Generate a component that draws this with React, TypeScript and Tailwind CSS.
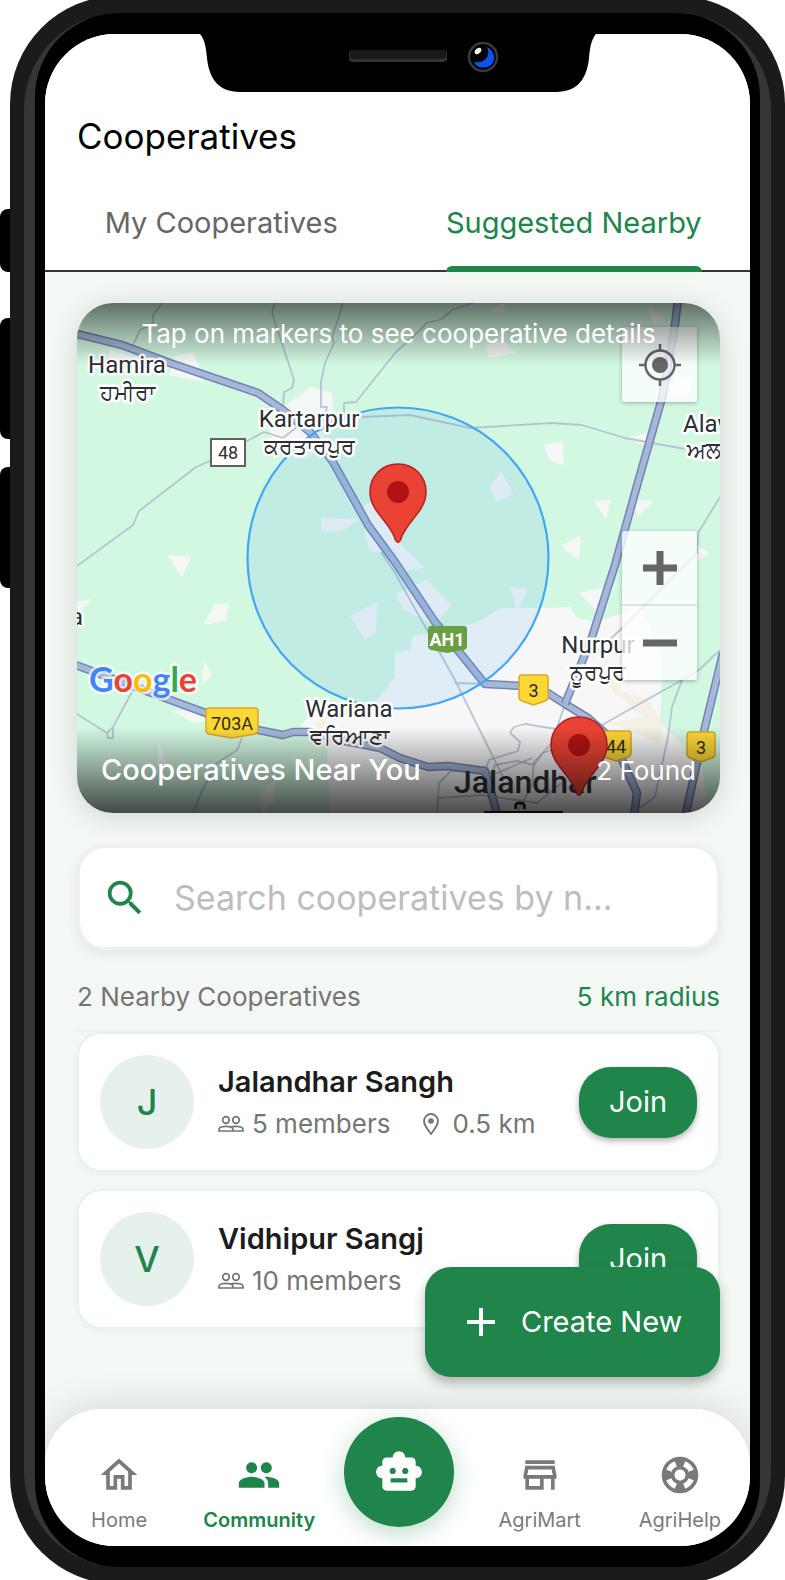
import React, { useState } from "react";
import {
  MdAdd,
  MdOutlineHome,
  MdOutlineStore,
  MdOutlineSupport,
  MdPeople,
  MdSearch,
  MdSmartToy,
} from "react-icons/md";

const HIGHWAYS = [
  "M-4 30 L45 42 L93 60 L181 90 L206 107 L233 129 L256 159 L291 222 L318 259 L358 319 L408 381 L445 383 L471 390 L488 401 L511 415 L528 430 L545 457 L560 490 L557 514",
  "M601 -4 L598 22 L585 95 L561 179 L538 262 L515 334 L488 401",
  "M-4 361 L126 409 L166 424 L206 432 L216 429 L233 429 L263 437 L303 445 L323 455 L351 464 L371 463 L408 468 L421 514",
  "M646 350 L628 424 L608 514",
];

const ROADS = [
  "M0 263 L56 222 L62 208 L119 164 L133 158 L187 129 L206 135 L220 124",
  "M198 0 L195 10 L217 77 L215 85 L207 89 L206 105",
  "M266 0 L255 35 L257 40 L248 60 L244 79 L244 104 L250 104 L244 128",
  "M396 0 L375 7 L365 16 L350 20 L338 32 L318 50 L279 99 L267 100 L267 112",
  "M85 0 L76 12 L76 20 L63 27 L56 42",
  "M240 120 L283 114 L333 112 L393 125 L475 120 L505 122 L548 135 L608 146",
  "M643 194 L621 230 L620 250 L580 290 L540 330 L516 352",
  "M55 389 L36 424 L30 430 L0 411 M36 424 V435 H31 L30 430",
  "M165 435 L160 447 L140 460 L125 488 L116 510",
  "M304 249 L318 270 L378 377 L426 474 M378 380 L408 381",
  "M643 347 L622 367 L605 377 L525 422 M605 377 L595 404 L591 434 L578 494 L563 505",
  "M488 401 L475 440 L457 459 L455 482 L440 510",
  "M433 430 L437 424 L448 421 L485 427 L493 440 L466 450 L457 462 L440 458 L418 462 L414 474 M433 430 L443 439 L441 448 L412 457 L408 468",
  "M374 468 L362 480 L360 510 M362 495 L405 492 L460 500 L485 480 M374 468 L420 470 L455 455",
];

const PATCHES = [
  "206 105 234 84 255 90 256 108 246 136 233 155 218 156 207 138 193 134 196 116",
  "32 47 62 55 60 64 30 62",
  "98 53 117 49 126 79 92 72",
  "411 7 427 0 428 10",
  "571 2 586 17 577 22",
  "408 42 427 38 438 50 412 55",
  "598 73 617 75 611 94 590 94",
  "467 141 486 139 487 162 473 158",
  "550 135 572 130 570 144",
  "517 198 534 197 529 216",
  "552 197 577 198 562 213",
  "484 243 504 232 502 258",
  "620 242 633 250 620 258",
  "502 290 541 281 519 308",
  "90 252 114 254 105 274",
  "138 301 152 300 149 318 126 322",
  "0 299 15 296 0 311",
  "127 357 135 372 125 382",
  "94 408 126 405 128 418 118 420",
  "82 440 90 462 80 463",
  "182 490 200 475 196 500 186 510",
  "413 184 424 168 436 191 419 199",
  "244 215 282 216 265 228 244 229",
  "283 205 296 198 330 250 292 248",
  "318 252 331 248 348 265 320 268",
  "273 313 300 299 299 330 288 336",
  "318 291 350 277 374 302 358 322 326 306",
  "433 284 451 286 440 308",
];

type LabelProps = {
  x: number;
  y: number;
  size?: number;
  anchor?: "start" | "middle";
  children: string;
};

function MapLabel({ x, y, size = 24, anchor = "middle", children }: LabelProps) {
  return (
    <text
      x={x}
      y={y}
      fontSize={size}
      textAnchor={anchor}
      fill="#2c2f33"
      stroke="#ffffff"
      strokeWidth={5}
      strokeLinejoin="round"
      paintOrder="stroke"
    >
      {children}
    </text>
  );
}

function Shield({ x, y, w, label }: { x: number; y: number; w: number; label: string }) {
  return (
    <g>
      <path
        d={`M${x + 3} ${y} H${x + w - 3} Q${x + w} ${y} ${x + w} ${y + 3} V${y + 22} Q${x + w} ${y + 25} ${x + w - 3} ${y + 26} L${x + w / 2} ${y + 30} L${x + 3} ${y + 26} Q${x} ${y + 25} ${x} ${y + 22} V${y + 3} Q${x} ${y} ${x + 3} ${y} Z`}
        fill="#fdd835"
        stroke="#d9a82a"
        strokeWidth="1.5"
      />
      <text x={x + w / 2} y={y + 22} fontSize="18" textAnchor="middle" fill="#2f2a14">
        {label}
      </text>
    </g>
  );
}

function Pin({ x, y }: { x: number; y: number }) {
  return (
    <g transform={`translate(${x} ${y})`}>
      <path
        d="M0 -78 C-16 -78 -28 -66 -28 -50 C-28 -30 -8 -21 -2.500 -2 Q0 3 2.500 -2 C8 -21 28 -30 28 -50 C28 -66 16 -78 0 -78 Z"
        fill="#ea4335"
        stroke="#b8201c"
        strokeWidth="1.500"
      />
      <circle cy="-50" r="11" fill="#b11313" />
    </g>
  );
}

function MembersIcon() {
  return (
    <svg viewBox="0 0 26 18" className="h-[18px] w-[26px]" fill="none" stroke="currentColor" strokeWidth="1.700" aria-hidden="true">
      <circle cx="8" cy="5" r="3.300" />
      <circle cx="18" cy="5" r="3.300" />
      <path d="M1 16 V14.500 C1 12.500 4.500 11.300 8 11.300 C11.500 11.300 15 12.500 15 14.500 V16 Z" />
      <path d="M12 12 C13.800 11.500 16 11.300 18 11.300 C21.500 11.300 25 12.500 25 14.500 V16 H15" />
    </svg>
  );
}

function PlaceIcon() {
  return (
    <svg viewBox="0 0 18 24" className="h-6 w-[18px]" fill="none" stroke="currentColor" strokeWidth="1.900" aria-hidden="true">
      <path d="M9 22 C5 17 2 13 2 9 A7 7 0 0 1 16 9 C16 13 13 17 9 22 Z" />
      <circle cx="9" cy="9" r="2.800" fill="currentColor" stroke="none" />
    </svg>
  );
}

function MapArt() {
  return (
    <svg
      viewBox="0 0 643 510"
      preserveAspectRatio="xMidYMid slice"
      className="block h-[510px] w-full font-['Roboto','Noto_Sans',sans-serif]"
      role="img"
      aria-label="Map of cooperatives around Jalandhar"
    >
      <rect width="643" height="510" fill="#d3f8e2" />
      <polygon
        fill="#f7f7f7"
        points="333,347 336,333 398,320 425,305 468,305 493,304 500,315 521,319 545,310 561,300 574,325 585,357 583,420 608,444 625,462 630,510 253,510 250,444 223,422 240,408 286,414 300,397 318,374 318,350"
      />
      <polygon fill="#f5efe4" points="534,385 570,396 585,420 583,440 560,430 530,420 566,415" />
      <polygon fill="#f5efe4" points="528,375 548,366 540,395" />
      <polygon fill="#f5efe4" points="236,421 250,414 246,430" />
      {PATCHES.map((points) => (
        <polygon key={points} points={points} fill="#f5f6f6" />
      ))}
      <g fill="none" stroke="#a9b3c8" strokeOpacity="0.75" strokeWidth="1.800" strokeLinejoin="round">
        {ROADS.map((d) => (
          <path key={d} d={d} />
        ))}
      </g>
      {HIGHWAYS.map((d) => (
        <g key={d} fill="none" strokeLinejoin="round">
          <path d={d} stroke="#7186b4" strokeWidth="8.500" />
          <path d={d} stroke="#a6b7d8" strokeWidth="5.500" />
        </g>
      ))}
      <circle cx="321" cy="255" r="150.500" fill="#3ba0ee" fillOpacity="0.120" stroke="#42a5f5" strokeWidth="2.200" />

      <MapLabel x={50} y={70}>Hamira</MapLabel>
      <MapLabel x={50} y={97} size={22}>ਹਮੀਰਾ</MapLabel>
      <MapLabel x={232} y={124}>Kartarpur</MapLabel>
      <MapLabel x={232} y={151} size={22}>ਕਰਤਾਰਪੁਰ</MapLabel>
      <MapLabel x={606} y={129} anchor="start">Alaw</MapLabel>
      <MapLabel x={610} y={155} size={22} anchor="start">ਅਲ</MapLabel>
      <MapLabel x={-7} y={322} anchor="start">a</MapLabel>
      <MapLabel x={272} y={414}>Wariana</MapLabel>
      <MapLabel x={272} y={441} size={22}>ਵਰਿਆਣਾ</MapLabel>
      <MapLabel x={521} y={350}>Nurpur</MapLabel>
      <MapLabel x={521} y={377} size={22}>ਨੂਰਪੁਰ</MapLabel>

      <rect x="134" y="136" width="34" height="27" fill="#ffffff" stroke="#616161" strokeWidth="2" />
      <text x="151" y="156" fontSize="18" textAnchor="middle" fill="#2c2f33">48</text>

      <path
        d="M354 323 H387 Q390 323 390 326 V343 Q390 346 387 347 L370 350 L354 347 Q351 346 351 343 V326 Q351 323 354 323 Z"
        fill="#6aa041"
      />
      <text x="370" y="343" fontSize="18" fontWeight="700" textAnchor="middle" fill="#ffffff">AH1</text>

      <Shield x={129} y={405} w={52} label="703A" />
      <Shield x={442} y={372} w={29} label="3" />
      <Shield x={524} y={428} w={30} label="44" />
      <Shield x={610} y={429} w={28} label="3" />

      <text
        x="12"
        y="389"
        fontSize="34"
        fontWeight="700"
        stroke="#ffffff"
        strokeOpacity="0.700"
        strokeWidth="5"
        strokeLinejoin="round"
        paintOrder="stroke"
        fontFamily="Lato, sans-serif"
      >
        <tspan fill="#4285f4">G</tspan>
        <tspan fill="#ea4335">o</tspan>
        <tspan fill="#fbbc05">o</tspan>
        <tspan fill="#4285f4">g</tspan>
        <tspan fill="#34a853">l</tspan>
        <tspan fill="#ea4335">e</tspan>
      </text>

      <text x="377" y="490" fontSize="32" fontWeight="500" fill="#2c2f33">Jalandhar</text>
      <rect x="407" y="508" width="79" height="2" fill="#1c1c1c" />
      <path d="M439 506 q-2 -6 4 -6 q6 0 4 6" fill="none" stroke="#1c1c1c" strokeWidth="3" />

      <Pin x={321} y={239} />
      <Pin x={502} y={492} />
    </svg>
  );
}

function MapCard() {
  return (
    <section className="relative overflow-hidden rounded-[36px] shadow-[0_4px_28px_rgba(0,0,0,0.14)]">
      <MapArt />
      <button
        type="button"
        aria-label="My location"
        className="absolute top-6 right-[23px] grid size-[75px] place-items-center rounded-[3px] bg-white/75 shadow-[0_1px_4px_rgba(0,0,0,0.3)]"
      >
        <svg viewBox="0 0 42 42" className="size-[42px]" fill="none" stroke="#666666" strokeWidth="2.500">
          <circle cx="21" cy="21" r="14.500" />
          <circle cx="21" cy="21" r="8" fill="#666666" stroke="none" />
          <path d="M21 0 V6 M21 36 V42 M0 21 H6 M36 21 H42" />
        </svg>
      </button>
      <div className="absolute top-[228px] right-[23px] flex w-[75px] flex-col rounded-[3px] bg-white/75 shadow-[0_1px_4px_rgba(0,0,0,0.3)]">
        <button type="button" aria-label="Zoom in" className="grid h-[75px] place-items-center border-b-2 border-black/10">
          <svg viewBox="0 0 34 34" className="size-[34px]" stroke="#666666" strokeWidth="7">
            <path d="M17 0 V34 M0 17 H34" />
          </svg>
        </button>
        <button type="button" aria-label="Zoom out" className="grid h-[74px] place-items-center">
          <svg viewBox="0 0 34 34" className="size-[34px]" stroke="#666666" strokeWidth="7">
            <path d="M0 17 H34" />
          </svg>
        </button>
      </div>
      <p className="pointer-events-none absolute inset-x-0 top-0 h-[62px] bg-linear-to-b from-black/55 to-transparent text-center text-[26px] leading-[62px] whitespace-nowrap text-white">
        Tap on markers to see cooperative details
      </p>
      <div className="pointer-events-none absolute inset-x-0 bottom-0 flex h-[86px] items-center justify-between bg-linear-to-t from-black/70 to-transparent px-6 text-white">
        <h2 className="text-[29px] leading-9 font-medium">Cooperatives Near You</h2>
        <span className="text-[26px]">2 Found</span>
      </div>
    </section>
  );
}

type Cooperative = { name: string; members: string; distance: string };

const COOPERATIVES: Cooperative[] = [
  { name: "Jalandhar Sangh", members: "5 members", distance: "0.5 km" },
  { name: "Vidhipur Sangj", members: "10 members", distance: "" },
];

function CooperativeCard({ name, members, distance }: Cooperative) {
  return (
    <li className="flex h-[140px] items-center rounded-3xl border-2 border-[#e8f2ed] bg-white px-[21px] shadow-[0_2px_6px_rgba(0,0,0,0.03)]">
      <span className="grid size-[94px] shrink-0 place-items-center rounded-full bg-[#e7f1ec] text-4xl font-medium text-[#20854b]">
        {name[0]}
      </span>
      <div className="ml-6 flex-1">
        <h3 className="text-[29px] leading-[44px] font-semibold text-[#1c1c1c]">{name}</h3>
        <p className="flex items-center text-[26px] leading-10 whitespace-nowrap text-[#757575]">
          <MembersIcon />
          <span className="ml-2">{members}</span>
          {distance && (
            <>
              <span className="ml-8">
                <PlaceIcon />
              </span>
              <span className="ml-3">{distance}</span>
            </>
          )}
        </p>
      </div>
      <button
        type="button"
        className="h-[71px] w-[118px] rounded-[32px] bg-[#20854b] text-[29px] text-white shadow-[0_3px_6px_rgba(0,0,0,0.3)]"
      >
        Join
      </button>
    </li>
  );
}

const TABS = ["My Cooperatives", "Suggested Nearby"];

function NavItem({ icon, label, active = false }: { icon: React.ReactNode; label: string; active?: boolean }) {
  return (
    <a
      href="#"
      aria-current={active ? "page" : undefined}
      className={`flex flex-col items-center gap-2 pt-11 text-[20px] leading-[30px] ${
        active ? "font-semibold text-[#20854b]" : "text-[#7a7a7a]"
      }`}
    >
      {icon}
      {label}
    </a>
  );
}

export default function App() {
  const [tab, setTab] = useState(1);

  return (
    <div className="flex min-h-screen overflow-hidden bg-white font-['Inter','Noto_Sans',sans-serif] text-black">
      <div className="flex w-[10px] shrink-0 flex-col pt-[209px]">
        <span className="h-[63px] rounded-l-lg bg-black" />
        <span className="mt-[46px] h-[121px] rounded-l-lg bg-black" />
        <span className="mt-7 h-[121px] rounded-l-lg bg-black" />
      </div>

      <div className="-my-1 flex flex-1 rounded-[108px] bg-[#1b1b1b] px-[14px] py-[17px]">
        <div className="flex flex-1 rounded-[96px] bg-[#353535] px-[11px]">
          <div className="flex flex-1 rounded-[84px] bg-black px-[10px] py-[21px]">
            <div className="relative flex flex-1 flex-col overflow-hidden rounded-[70px] bg-[#f3f8f5]">
              <svg
                viewBox="0 0 396 58"
                className="absolute top-0 left-1/2 h-[58px] w-[396px] -translate-x-1/2"
                aria-hidden="true"
              >
                <path d="M0 0 H396 C391 6 390 14 389 24 C387 44 378 58 356 58 H40 C18 58 9 44 7 24 C6 14 5 6 0 0 Z" fill="#000000" />
                <rect x="149" y="16" width="98" height="12" rx="4" fill="#333333" />
                <rect x="150" y="16" width="96" height="9" rx="3" fill="#191919" />
                <circle cx="283" cy="23" r="14" fill="#000000" stroke="#3a3a3a" strokeWidth="2.500" />
                <path d="M287 13 C297 18 297 33 284 33.500 C279 34 276 32 274 28 C285 30 291 22 287 13 Z" fill="#0a54f5" />
                <ellipse cx="278" cy="17" rx="2.500" ry="3.800" fill="#ffffff" transform="rotate(50 278 17)" />
              </svg>

              <header className="bg-white pt-[78px]">
                <h1 className="px-8 text-[35px] leading-[48px]">Cooperatives</h1>
                <div role="tablist" className="mt-[14px] grid h-[98px] grid-cols-2 border-b-2 border-[#3a3038]">
                  {TABS.map((label, index) => (
                    <button
                      key={label}
                      type="button"
                      role="tab"
                      aria-selected={tab === index}
                      onClick={() => setTab(index)}
                      className={`relative h-[98px] justify-self-center text-[29px] whitespace-nowrap ${
                        tab === index ? "text-[#20854b]" : "text-[#666666]"
                      }`}
                    >
                      {label}
                      {tab === index && (
                        <span className="absolute inset-x-0 bottom-0 h-[6px] rounded-t-md bg-[#20854b]" />
                      )}
                    </button>
                  ))}
                </div>
              </header>

              <main className="pt-[31px] pr-[30px] pb-20 pl-8">
                <MapCard />

                <label className="mt-8 flex h-[105px] items-center rounded-[28px] border-3 border-[#eeefee] bg-white pl-[22px] shadow-[0_4px_12px_rgba(0,0,0,0.07)]">
                  <span className="sr-only">Search cooperatives</span>
                  <MdSearch className="size-[46px] shrink-0 text-[#20854b]" />
                  <input
                    type="search"
                    placeholder="Search cooperatives by n..."
                    className="ml-[26px] h-16 min-w-0 flex-1 bg-transparent text-[34px] outline-none placeholder:text-[#bdbdbd]"
                  />
                </label>

                <div className="mt-7 flex h-[54px] justify-between border-b-2 border-[#edf0ee] text-[26px] leading-[38px]">
                  <h2 className="text-[#757575]">2 Nearby Cooperatives</h2>
                  <span className="text-[#20854b]">5 km radius</span>
                </div>

                <ul className="flex flex-col gap-[17px]">
                  {COOPERATIVES.map((item) => (
                    <CooperativeCard key={item.name} {...item} />
                  ))}
                </ul>
              </main>

              <div className="relative mt-auto">
                <button
                  type="button"
                  className="absolute right-[30px] bottom-[169px] flex h-[110px] w-[295px] items-center gap-4 rounded-[26px] bg-[#20854b] pl-8 text-[29px] text-white shadow-[0_6px_12px_rgba(0,0,0,0.28)]"
                >
                  <MdAdd className="size-12" />
                  Create New
                </button>
                <nav className="grid h-[137px] grid-cols-5 rounded-t-[56px] bg-white pl-1 shadow-[0_0_40px_rgba(0,0,0,0.14)]">
                  <NavItem icon={<MdOutlineHome className="size-11" />} label="Home" />
                  <NavItem icon={<MdPeople className="size-11" />} label="Community" active />
                  <a
                    href="#"
                    aria-label="Assistant"
                    className="mt-2 grid size-[110px] place-items-center justify-self-center rounded-full bg-[#20854b] text-white shadow-[0_6px_24px_rgba(32,133,75,0.3)]"
                  >
                    <MdSmartToy className="size-[50px]" />
                  </a>
                  <NavItem icon={<MdOutlineStore className="size-11" />} label="AgriMart" />
                  <NavItem icon={<MdOutlineSupport className="size-11" />} label="AgriHelp" />
                </nav>
              </div>
            </div>
          </div>
        </div>
      </div>
    </div>
  );
}
